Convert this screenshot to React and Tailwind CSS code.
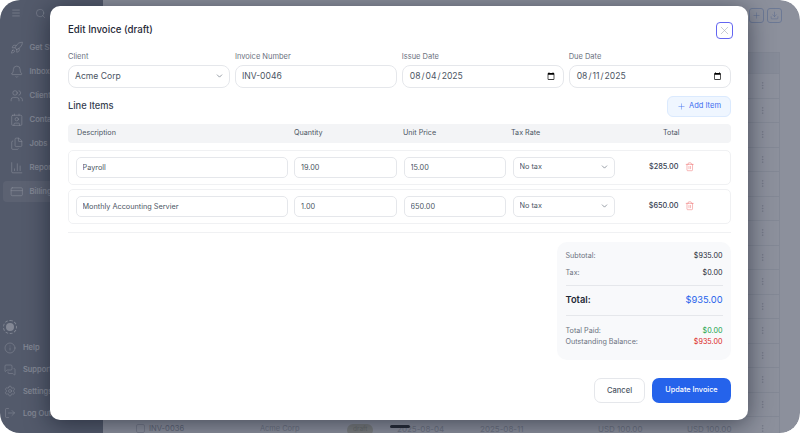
import React from "react";
import { Menu, Search, Rocket, Bell, Users, Contact, Files, BarChart3, CreditCard, Info, MessagesSquare, Settings, LogOut, Plus, Download, MoreVertical, X, ChevronDown, Trash2 } from "lucide-react";

const nav = [
  ["Get Started", Rocket], ["Inbox", Bell], ["Clients", Users], ["Contacts", Contact],
  ["Jobs", Files], ["Reports", BarChart3], ["Billing", CreditCard],
];
const foot = [["Help", Info], ["Support", MessagesSquare], ["Settings", Settings], ["Log Out", LogOut]];
const rows = Array.from({ length: 15 }, (_, i) => i);

function Sidebar() {
  return (
    <aside className="w-[103px] shrink-0 bg-[#8d939d] flex flex-col text-white/85 pb-[9px]">
      <div className="h-[24px] mt-[1px] flex items-center pl-[11px] gap-[14px]">
        <Menu size={10} strokeWidth={1.5} />
        <Search size={11} strokeWidth={1.2} />
      </div>
      <nav className="mt-[12px] mx-[3px] flex flex-col gap-[3px]">
        {nav.map(([t, I]) => (
          <div key={t} className={`h-[21px] flex items-center gap-[6px] pl-[7px] rounded-[4px] text-[7.7px] font-medium ${t === "Billing" ? "bg-white/15" : ""}`}>
            <I size={13.5} strokeWidth={1.1} /> {t}
          </div>
        ))}
      </nav>
      <div className="mt-auto flex flex-col pl-[3px]">
        <div className="w-[14px] h-[14px] rounded-full border border-dashed border-white/80 flex items-center justify-center mb-[3px]">
          <div className="w-[8px] h-[8px] rounded-full bg-white/85" />
        </div>
        {foot.map(([t, I]) => (
          <div key={t} className="h-[21.7px] flex items-center gap-[7px] pl-[1px] text-[7.5px] font-medium">
            <I size={12} strokeWidth={1.1} /> {t}
          </div>
        ))}
      </div>
    </aside>
  );
}

function Background() {
  return (
    <main className="flex-1 min-w-0 bg-white pl-[20px] pr-[20px] text-[8px] text-[#c3c5cc]">
      <div className="h-[52px] pt-[8px] -mr-[2px] flex justify-end gap-[3px]">
        {[Plus, Download].map((I, i) => (
          <div key={i} className="w-[15px] h-[15px] rounded-[3px] border border-[#bfd0f0] text-[#9db5e5] flex items-center justify-center">
            <I size={9} strokeWidth={1.4} />
          </div>
        ))}
      </div>
      <div className="border-r border-[#eceef1] border-t">
        <div className="h-[20px] bg-[#f3f4f6]" />
        {rows.map((i) => (
          <div key={i} className="h-[24.5px] border-t border-[#eceef1] flex items-center justify-between pl-[13px] pr-[12px] whitespace-nowrap">
            {i === 14 ? (
              <div className="grid grid-cols-[13px_111px_87px_50px_83px_118px_89px] items-center">
                <span className="w-[9px] h-[9px] rounded-[2px] border border-[#d5d7dc]" />
                <span className="text-[7.6px] text-[#a9acb5]">INV-0036</span>
                <span className="text-[7.4px]">Acme Corp</span>
                <span><span className="inline-block bg-[#dcdac4] rounded-full px-[6px] py-[1px] text-[6.5px] text-[#b5b39c]">draft</span></span>
                <span>2025-08-04</span>
                <span>2025-08-11</span>
                <span>USD 100.00</span>
              </div>
            ) : <span />}
            {i === 14 ? <span className="absolute left-[687px]">USD 100.00</span> : null}
            <MoreVertical size={9} strokeWidth={1.5} />
          </div>
        ))}
      </div>
    </main>
  );
}

const field = "block w-full border border-[#e5e7eb] bg-white text-[#4b5563] outline-none";
const big = `${field} h-[23px] rounded-[8px] px-[6px] text-[8.6px]`;
const small = `${field} h-[21px] rounded-[5px] px-[6px] text-[7.3px]`;
const label = "block text-[7.5px] leading-[10px] text-[#6b7280] mb-[2.5px]";

function Sel({ value, options, cls, size }) {
  return (
    <div className="relative">
      <select defaultValue={value} className={`${cls} appearance-none`}>
        {options.map((o) => <option key={o}>{o}</option>)}
      </select>
      <ChevronDown size={size} strokeWidth={1.5} className="absolute right-[6px] top-1/2 -translate-y-1/2 text-[#4b5563] pointer-events-none" />
    </div>
  );
}

function LineRow({ d, q, p, t }) {
  return (
    <div className="border border-[#f0f1f3] rounded-[5px] h-[35px] grid grid-cols-[212px_103px_102.5px_102.5px_1fr] gap-[6.5px] items-center pl-[6.5px]">
      <input defaultValue={d} className={small} />
      <input defaultValue={q} className={small} />
      <input defaultValue={p} className={small} />
      <Sel value="No tax" options={["No tax"]} cls={small} size={9} />
      <div className="flex items-center justify-end pr-[36px] gap-[6px] text-[7.3px] font-medium text-[#374151]">
        {t}
        <Trash2 size={9.5} strokeWidth={1.2} className="text-[#ef6a6a]" />
      </div>
    </div>
  );
}

function Modal() {
  return (
    <div className="absolute inset-0 bg-[#192139]/50 rounded-[20px]">
      <div className="absolute left-[50px] top-[6px] w-[698px] h-[414px] bg-white rounded-[10px] shadow-[0_4px_24px_rgba(10,15,30,0.55)] pl-[18px] pr-[17px] flex flex-col">
        <div className="h-[46px] flex items-center justify-between pt-[3px]">
          <h2 className="text-[9.7px] font-medium text-[#1f2937]">Edit Invoice (draft)</h2>
          <button className="w-[17px] h-[17px] -mr-[2px] rounded-[4px] border border-[#6366f1] flex items-center justify-center text-[#9ca3af]">
            <X size={13} strokeWidth={1} />
          </button>
        </div>
        <div className="grid grid-cols-4 gap-[4.5px]">
          <div><label className={label}>Client</label><Sel value="Acme Corp" options={["Acme Corp"]} cls={big} size={9} /></div>
          <div><label className={label}>Invoice Number</label><input defaultValue="INV-0046" className={big} /></div>
          <div><label className={label}>Issue Date</label><input type="date" defaultValue="2025-08-04" className={big} /></div>
          <div><label className={label}>Due Date</label><input type="date" defaultValue="2025-08-11" className={big} /></div>
        </div>
        <div className="mt-[8px] flex items-center justify-between">
          <h3 className="text-[9.3px] font-medium text-[#374151]">Line Items</h3>
          <button className="w-[64px] h-[21px] rounded-[6px] bg-[#eff6ff] border border-[#dbeafe] text-[#3b6cf0] text-[7.5px] flex items-center justify-center gap-[3px]">
            <Plus size={9} strokeWidth={1.2} /> Add Item
          </button>
        </div>
        <div className="mt-[7px] h-[19px] bg-[#f3f4f6] rounded-[4px] grid grid-cols-[217px_109px_108px_122px_1fr] items-center pl-[9px] text-[7.2px] text-[#4b5563]">
          <span>Description</span><span>Quantity</span><span>Unit Price</span><span>Tax Rate</span>
          <span className="pl-[30px]">Total</span>
        </div>
        <div className="mt-[7px] flex flex-col gap-[4px]">
          <LineRow d="Payroll" q="19.00" p="15.00" t="$285.00" />
          <LineRow d="Monthly Accounting Servier" q="1.00" p="650.00" t="$650.00" />
        </div>
        <div className="mt-[8.5px] border-t border-[#f0f1f3]" />
        <div className="mt-[9px] self-end w-[174px] h-[118px] rounded-[10px] bg-[#f8f9fb] px-[8.5px] pt-[8px] text-[7.2px] text-[#6b7280]">
          <div className="flex justify-between leading-[12px]"><span>Subtotal:</span><span className="text-[#1f2937]">$935.00</span></div>
          <div className="flex justify-between leading-[12px] mt-[5px]"><span>Tax:</span><span className="text-[#1f2937]">$0.00</span></div>
          <div className="border-t border-[#e5e7eb] mt-[5.5px]" />
          <div className="flex justify-between items-center h-[29px]">
            <span className="text-[9.3px] font-semibold text-[#1f2937]">Total:</span>
            <span className="text-[9.3px] text-[#2563eb]">$935.00</span>
          </div>
          <div className="border-t border-[#e5e7eb]" />
          <div className="flex justify-between leading-[11px] mt-[9px]"><span>Total Paid:</span><span className="text-[#16a34a]">$0.00</span></div>
          <div className="flex justify-between leading-[11px]"><span>Outstanding Balance:</span><span className="text-[#dc2626]">$935.00</span></div>
        </div>
        <div className="mt-[18px] self-end flex gap-[7px] font-medium">
          <button className="w-[51px] h-[25px] rounded-[7px] border border-[#e5e7eb] text-[#4b5563] bg-white text-[7.6px]">Cancel</button>
          <button className="w-[79px] h-[25px] rounded-[7px] bg-[#2563eb] text-white text-[7.3px]">Update Invoice</button>
        </div>
      </div>
      <div className="absolute left-[390px] top-[424.5px] w-[20px] h-[3px] rounded-full bg-[#1f2430]" />
    </div>
  );
}

export default function App() {
  return (
    <div className="w-[800px] h-[433px] bg-white overflow-hidden" style={{ fontFamily: "Inter, 'Noto Sans', sans-serif" }}>
      <div className="relative w-full h-full rounded-[20px] overflow-hidden flex">
        <Sidebar />
        <Background />
        <Modal />
      </div>
    </div>
  );
}
